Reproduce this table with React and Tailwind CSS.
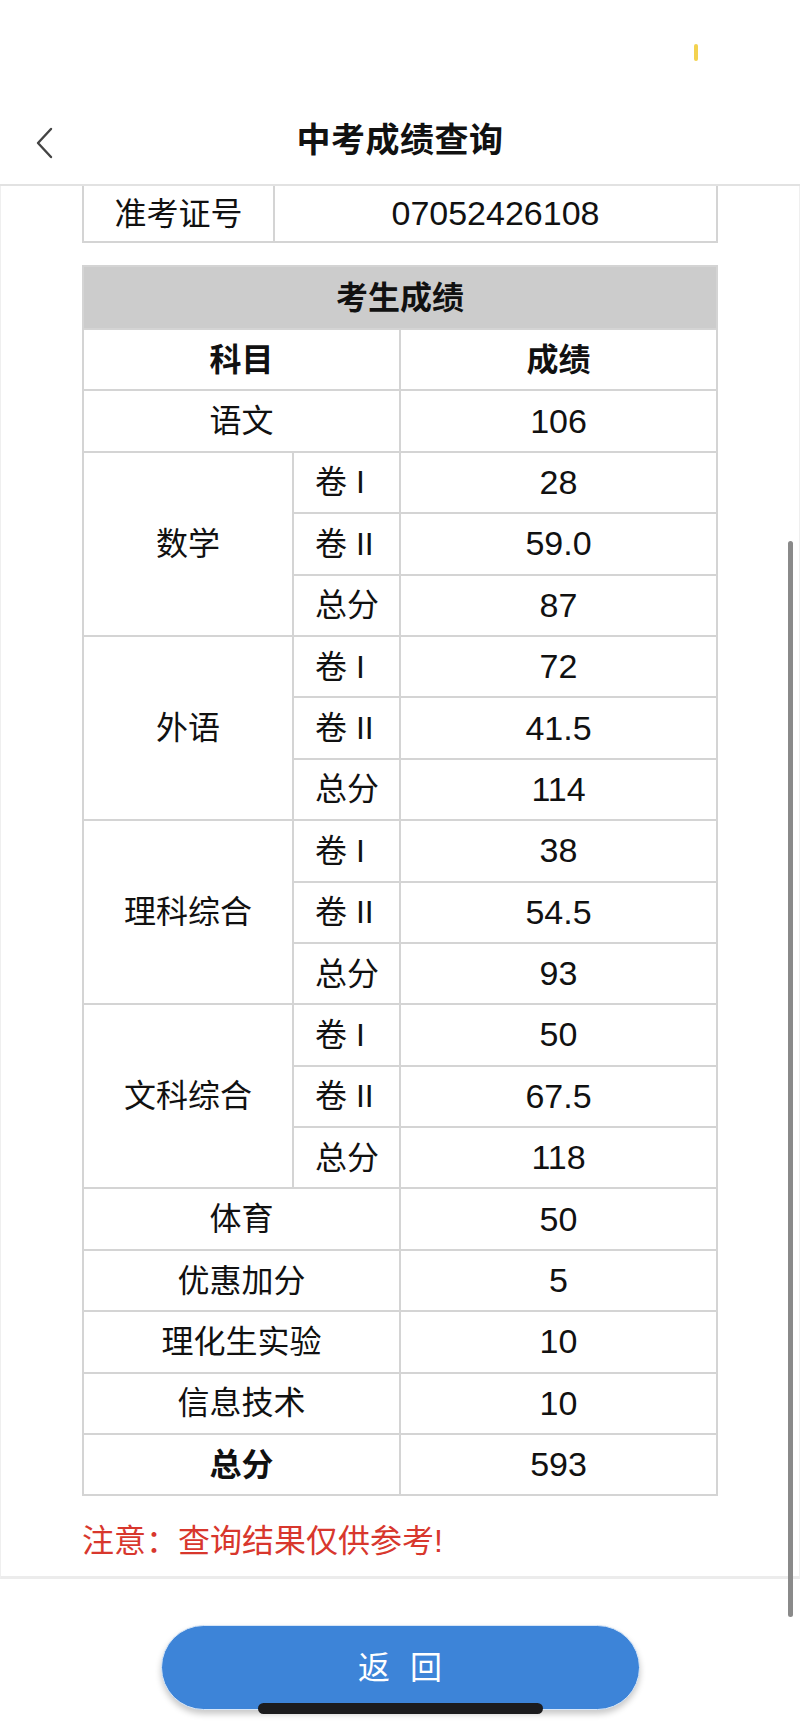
import React from "react";

// score rows: groups with three sub rows, then single rows
const GROUPS = [
  { name: "数学", parts: [["卷 I", "28"], ["卷 II", "59.0"], ["总分", "87"]] },
  { name: "外语", parts: [["卷 I", "72"], ["卷 II", "41.5"], ["总分", "114"]] },
  { name: "理科综合", parts: [["卷 I", "38"], ["卷 II", "54.5"], ["总分", "93"]] },
  { name: "文科综合", parts: [["卷 I", "50"], ["卷 II", "67.5"], ["总分", "118"]] },
];

const SINGLES = [
  ["体育", "50"],
  ["优惠加分", "5"],
  ["理化生实验", "10"],
  ["信息技术", "10"],
];

const cell = "bg-white flex items-center justify-center";

export default function App() {
  return (
    <div
      className="relative w-[800px] h-[1731px] overflow-hidden bg-white text-[#111]"
      style={{ fontFamily: '"Liberation Sans", "Noto Sans CJK SC", sans-serif' }}
    >
      {/* status bar */}
      <div className="h-[96px]" />
      <div className="absolute left-[694px] top-[44px] w-[4px] h-[17px] rounded-full bg-[#f3d250]" />

      {/* nav bar */}
      <div className="relative h-[90px] flex items-center justify-center border-b-2 border-[#e2e2e2]">
        <button className="absolute left-[30px] top-[26px] p-[4px]">
          <svg width="22" height="34" viewBox="0 0 22 34" fill="none">
            <path d="M17 3 L4 17 L17 31" stroke="#444" strokeWidth="2.4" strokeLinecap="round" strokeLinejoin="round" />
          </svg>
        </button>
        <h1 className="text-[34px] font-bold leading-none tracking-[0.5px]">中考成绩查询</h1>
      </div>

      {/* scroll card */}
      <div className="border-x border-[#efefef] border-b-[3px] border-b-[#ececec] pl-[81px] pb-[15px]">
        <div className="w-[636px] h-[57px] grid grid-cols-[189px_1fr] gap-x-[2px] bg-[#d4d4d4] px-[2px] pb-[2px]">
          <div className={`${cell} text-[32px]`}>准考证号</div>
          <div className={`${cell} text-[34px]`}>07052426108</div>
        </div>

        <div className="mt-[22px] w-[636px] grid grid-cols-[208px_105px_1fr] grid-rows-[61px_repeat(19,59.4px)] gap-[2px] bg-[#d4d4d4] border-2 border-[#d4d4d4] text-[32px]">
          <div className="col-span-3 bg-[#cccccc] flex items-center justify-center font-bold">考生成绩</div>

          <div className={`${cell} col-span-2 font-bold`}>科目</div>
          <div className={`${cell} font-bold`}>成绩</div>

          <div className={`${cell} col-span-2`}>语文</div>
          <div className={`${cell} text-[34px]`}>106</div>

          {GROUPS.map((g) => (
            <React.Fragment key={g.name}>
              <div className={`${cell} row-span-3`}>{g.name}</div>
              {g.parts.map(([p, v]) => (
                <React.Fragment key={p}>
                  <div className="bg-white flex items-center pl-[21px]">{p}</div>
                  <div className={`${cell} text-[34px]`}>{v}</div>
                </React.Fragment>
              ))}
            </React.Fragment>
          ))}

          {SINGLES.map(([n, v]) => (
            <React.Fragment key={n}>
              <div className={`${cell} col-span-2`}>{n}</div>
              <div className={`${cell} text-[34px]`}>{v}</div>
            </React.Fragment>
          ))}

          <div className={`${cell} col-span-2 font-bold`}>总分</div>
          <div className={`${cell} text-[34px]`}>593</div>
        </div>

        <p className="mt-[25px] text-[32px] leading-[40px] text-[#d8372d]">注意：查询结果仅供参考!</p>
      </div>

      {/* bottom button */}
      <div className="mt-[46px] flex justify-center">
        <button className="w-[479px] h-[85px] rounded-full bg-[#3d84d8] text-white text-[32px] flex items-center justify-center gap-[20px] shadow-[0_4px_6px_rgba(0,0,0,0.22)] border border-[#d6e6f8]">
          <span>返</span>
          <span>回</span>
        </button>
      </div>

      {/* home indicator + scroll thumb */}
      <div className="absolute left-[258px] top-[1703px] w-[285px] h-[11px] rounded-full bg-[#1c1c1e]" />
      <div className="absolute left-[788px] top-[541px] w-[5px] h-[1076px] rounded-full bg-[#8a8a8a]" />
    </div>
  );
}
